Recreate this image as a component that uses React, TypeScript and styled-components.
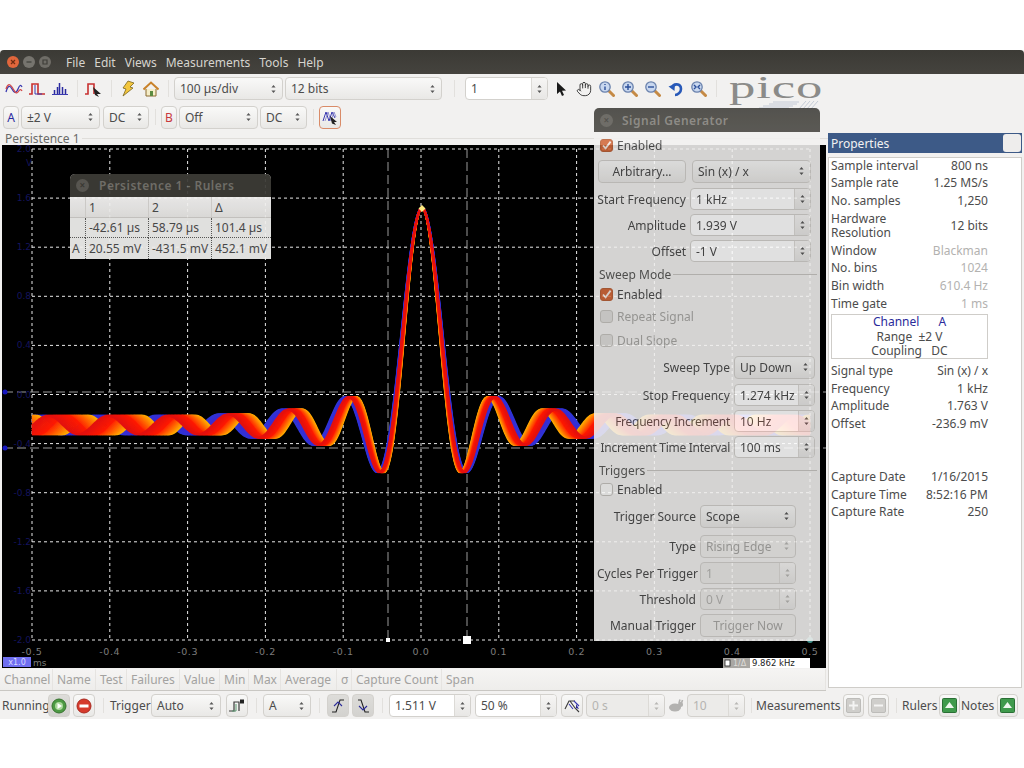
import React from "react";
import styled, { createGlobalStyle, css } from "styled-components";
import { Hand } from "lucide-react";

const Global = createGlobalStyle`
  html, body { margin: 0; padding: 0; background: #fff; }
  body { font-family: "Noto Sans", sans-serif; font-size: 12px; color: #4c4c4c; }
`;

const Page = styled.div`
  position: relative;
  width: 1024px;
  height: 768px;
  padding-top: 50px;
  box-sizing: border-box;
  overflow: hidden;
  background: #fff;
`;

const Win = styled.div`
  width: 1024px;
  height: 669px;
  display: flex;
  flex-direction: column;
  background: #f2f1f0;
`;

const TitleBar = styled.div`
  height: 24px;
  flex: none;
  display: flex;
  align-items: center;
  padding-left: 7px;
  background: linear-gradient(#3b3a35, #45433e);
  border-radius: 4px 4px 0 0;
`;

const Dot = styled.span<{ $c: string; $mr: number }>`
  width: 12px;
  height: 12px;
  border-radius: 50%;
  margin-right: ${(p) => p.$mr}px;
  background: ${(p) => p.$c};
  flex: none;
  display: flex;
  align-items: center;
  justify-content: center;
`;

const MenuItem = styled.span`
  color: #d6d4ce;
  font-size: 12px;
  margin-right: 9px;
`;

const Toolbar = styled.div<{ $h: number; $pl?: number }>`
  height: ${(p) => p.$h}px;
  flex: none;
  display: flex;
  align-items: center;
  padding-left: ${(p) => p.$pl ?? 2}px;
`;

const Slot = styled.span<{ $w?: number }>`
  width: ${(p) => p.$w ?? 23}px;
  height: 20px;
  flex: none;
  display: flex;
  align-items: center;
  justify-content: center;
`;

const Sep = styled.span<{ $w: number; $line?: boolean }>`
  width: ${(p) => p.$w}px;
  flex: none;
  align-self: stretch;
  position: relative;
  ${(p) =>
    p.$line &&
    css`
      &::after {
        content: "";
        position: absolute;
        left: 50%;
        top: 6px;
        bottom: 6px;
        width: 1px;
        background: #e2e0dd;
      }
    `}
`;

const controlBase = css`
  box-sizing: border-box;
  height: 23px;
  flex: none;
  display: flex;
  align-items: center;
  border: 1px solid #d3d1cd;
  border-radius: 4px;
  font-size: 12px;
  color: #4c4c4c;
  white-space: nowrap;
`;

const ComboBox = styled.div<{ $w: number; $off?: boolean }>`
  ${controlBase}
  width: ${(p) => p.$w}px;
  padding: 0 5px;
  justify-content: space-between;
  background: linear-gradient(#f9f9f8, #e9e8e6);
  ${(p) =>
    p.$off &&
    css`
      color: #a9a8a5;
      background: #efeeec;
    `}
`;

const SpinBox = styled.div<{ $w: number; $off?: boolean; $h?: number }>`
  ${controlBase}
  width: ${(p) => p.$w}px;
  height: ${(p) => p.$h ?? 23}px;
  background: ${(p) => (p.$off ? "#ecebe9" : "#fff")};
  color: ${(p) => (p.$off ? "#b5b4b1" : "#4c4c4c")};
  overflow: hidden;
`;

const SpinText = styled.span`
  flex: 1;
  padding-left: 5px;
`;

const SpinArrows = styled.span`
  width: 15px;
  align-self: stretch;
  flex: none;
  display: flex;
  align-items: center;
  justify-content: center;
  border-left: 1px solid #dcdad6;
  background: linear-gradient(#f6f5f4, #e8e7e5);
`;

const IconBtn = styled.div<{ $w?: number; $on?: boolean; $active?: boolean }>`
  ${controlBase}
  width: ${(p) => p.$w ?? 22}px;
  justify-content: center;
  background: ${(p) =>
    p.$on ? "linear-gradient(#dddcd9, #d3d2cf)" : "linear-gradient(#f9f9f8, #e9e8e6)"};
  ${(p) => p.$active && "border: 1px solid #d98b68;"}
`;

const ChanBtn = styled(IconBtn)<{ $c: string }>`
  color: ${(p) => p.$c};
  font-size: 12px;
`;

const ToolLabel = styled.span<{ $w: number }>`
  width: ${(p) => p.$w}px;
  flex: none;
  white-space: nowrap;
  font-size: 12px;
  color: #4c4c4c;
`;

const Logo = styled.div`
  margin-left: 9px;
  width: 91px;
  height: 29px;
  position: relative;
  flex: none;
`;

const LogoText = styled.span`
  position: absolute;
  left: -1px;
  top: -3px;
  font-family: "Liberation Serif", serif;
  font-size: 31px;
  line-height: 34px;
  color: #8b8b89;
  letter-spacing: 0.5px;
  transform: scaleX(1.7);
  transform-origin: left top;
`;

const LogoHatch = styled.svg`
  position: absolute;
  left: 29px;
  top: 27px;
`;

const Main = styled.div`
  flex: 1;
  display: flex;
  min-height: 0;
`;

const LeftCol = styled.div`
  width: 828px;
  flex: none;
  display: flex;
  flex-direction: column;
`;

const ViewLabel = styled.div`
  height: 14px;
  flex: none;
  display: flex;
  align-items: center;
  gap: 2px;
  padding-left: 5px;
  font-size: 12px;
  color: #6a6a68;
  white-space: nowrap;
  &::after {
    content: "";
    flex: 1;
    height: 1px;
    background: #e0dedb;
  }
`;

const Scope = styled.div`
  width: 824px;
  height: 523px;
  margin-left: 2px;
  flex: none;
  background: #000;
  svg {
    display: block;
  }
`;

const MeasureHead = styled.div`
  height: 21px;
  width: 826px;
  margin-top: 1px;
  flex: none;
  display: flex;
  background: linear-gradient(#f5f4f3, #eeedeb);
  border-bottom: 1px solid #c9c7c3;
  box-sizing: content-box;
`;

const HeadCell = styled.div<{ $w?: number }>`
  ${(p) => (p.$w ? `width: ${p.$w}px; flex: none;` : "flex: 1;")}
  box-sizing: border-box;
  padding-left: 4px;
  line-height: 21px;
  color: #a3a2a0;
  font-size: 12px;
  white-space: nowrap;
  border-right: 1px solid #e6e4e1;
`;

const RightCol = styled.div`
  width: 194px;
  padding-top: 2px;
  flex: none;
  display: flex;
  flex-direction: column;
  gap: 4px;
`;

const PropHead = styled.div`
  height: 20px;
  flex: none;
  display: flex;
  align-items: center;
  justify-content: space-between;
  padding: 0 1px 0 3px;
  background: #3d5a87;
  color: #f2f2f2;
  font-size: 12px;
`;

const PropSquare = styled.span`
  width: 18px;
  height: 18px;
  border-radius: 3px;
  background: #eeedec;
`;

const PropBody = styled.div`
  height: 531px;
  box-sizing: border-box;
  border: 1px solid #cfcdc9;
  background: #fff;
  padding-left: 2px;
  width: 194px;
`;

const PropList = styled.div`
  width: 157px;
  margin-top: -1px;
`;

const PropRow = styled.div<{ $tall?: boolean; $off?: boolean }>`
  height: ${(p) => (p.$tall ? 32.2 : 17.6)}px;
  display: flex;
  align-items: center;
  justify-content: space-between;
  font-size: 12px;
  line-height: 14px;
  color: #4c4c4c;
  white-space: nowrap;
  b {
    font-weight: 400;
    color: ${(p) => (p.$off ? "#b3b2b0" : "#4c4c4c")};
  }
`;

const ChannelBox = styled.div`
  margin: 2px 0 3px;
  height: 45px;
  box-sizing: border-box;
  border: 1px solid #cfcdc9;
  display: flex;
  flex-direction: column;
  align-items: center;
  justify-content: center;
  line-height: 14.5px;
  font-size: 12px;
  white-space: pre;
`;

const ChannelHead = styled.div`
  color: #2a2a9a;
  display: flex;
  gap: 19px;
`;

const Spacer = styled.div<{ $h: number }>`
  height: ${(p) => p.$h}px;
`;

/* floating windows */
const Dialog = styled.div`
  position: absolute;
  left: 594px;
  top: 108px;
  width: 226px;
  height: 533px;
  opacity: 0.88;
  background: #f2f1f0;
  border-radius: 5px 5px 0 0;
  display: flex;
  flex-direction: column;
`;

const DialogTitle = styled.div`
  height: 24px;
  flex: none;
  display: flex;
  align-items: center;
  gap: 9px;
  padding-left: 6px;
  background: linear-gradient(#3d3c37, #46443f);
  border-radius: 5px 5px 0 0;
  color: #7f7d77;
  font-size: 12px;
  font-weight: 600;
  letter-spacing: 0.5px;
  margin-bottom: 2px;
`;

const CloseDot = styled.span`
  width: 13px;
  height: 13px;
  flex: none;
  border-radius: 50%;
  background: #5d5b55;
  display: flex;
  align-items: center;
  justify-content: center;
  color: #3d3c37;
  font-size: 10px;
  line-height: 13px;
`;

const Row = styled.div<{ $h: number; $label?: number; $field?: number; $pl?: number }>`
  height: ${(p) => p.$h}px;
  flex: none;
  box-sizing: border-box;
  display: grid;
  align-items: center;
  padding-left: ${(p) => p.$pl ?? 0}px;
  grid-template-columns: ${(p) => (p.$label ? `${p.$label}px ${p.$field}px` : "auto")};
  column-gap: 4px;
`;

const RowLabel = styled.span<{ $tight?: boolean }>`
  text-align: right;
  white-space: nowrap;
  font-size: 12px;
  color: #4c4c4c;
  ${(p) => p.$tight && "letter-spacing: -0.28px;"}
`;

const CheckRow = styled.div<{ $h: number; $off?: boolean; $pl: number }>`
  height: ${(p) => p.$h}px;
  flex: none;
  display: flex;
  align-items: center;
  gap: 4px;
  padding-left: ${(p) => p.$pl}px;
  font-size: 12px;
  color: ${(p) => (p.$off ? "#a9a8a5" : "#4c4c4c")};
`;

const Check = styled.span<{ $on?: boolean; $off?: boolean }>`
  box-sizing: border-box;
  width: 13px;
  height: 13px;
  flex: none;
  border-radius: 3px;
  border: 1px solid ${(p) => (p.$on ? "#b9623b" : "#c6c4c0")};
  background: ${(p) => (p.$on ? "#d2693c" : p.$off ? "#e0dfdc" : "#fafaf9")};
  display: flex;
  align-items: center;
  justify-content: center;
`;

const PushBtn = styled.div<{ $w: number; $off?: boolean }>`
  ${controlBase}
  width: ${(p) => p.$w}px;
  justify-content: center;
  background: ${(p) => (p.$off ? "#efeeec" : "linear-gradient(#f9f9f8, #e9e8e6)")};
  color: ${(p) => (p.$off ? "#a9a8a5" : "#4c4c4c")};
`;

const ArbRow = styled.div`
  height: 30px;
  flex: none;
  display: flex;
  align-items: center;
  gap: 6px;
  padding-left: 4px;
`;

const Group = styled.div`
  margin: 0 3px;
  display: flex;
  flex-direction: column;
  border-radius: 4px;
`;

const GroupTitle = styled.div<{ $h: number }>`
  height: ${(p) => p.$h}px;
  flex: none;
  display: flex;
  align-items: center;
  gap: 2px;
  padding-left: 2px;
  font-size: 12px;
  color: #5a5a58;
  &::after {
    content: "";
    flex: 1;
    height: 1px;
    background: #c9c7c3;
  }
`;

const RulerWin = styled.div`
  position: absolute;
  left: 70px;
  top: 174px;
  width: 201px;
  height: 85px;
  opacity: 0.94;
  background: #efeeec;
  border-radius: 5px 5px 0 0;
`;

const RulerTitle = styled(DialogTitle)`
  height: 23px;
  margin: 0;
  font-size: 12px;
  gap: 10px;
  background: #3d3c37;
  color: #76746e;
`;

const RulerGrid = styled.div`
  display: grid;
  grid-template-columns: 15px 63px 63px 60px;
  grid-template-rows: 21px 20px 21px;
`;

const RulerCell = styled.div<{ $head?: boolean; $last?: boolean }>`
  padding-left: 3px;
  display: flex;
  align-items: center;
  white-space: nowrap;
  font-size: 12px;
  color: #4c4c4c;
  border-left: 1px dotted #5c5c5a;
  ${(p) => !p.$last && "border-bottom: 1px dotted #5c5c5a;"}
  ${(p) => p.$head && "background: linear-gradient(#f6f5f4, #e7e6e4); border-bottom: 1px solid #cfcdc9; border-left: 1px solid #d8d6d3;"}
`;

const RulerSide = styled(RulerCell)`
  border-left: none;
  padding-left: 2px;
`;

const Updown = ({ c = "#585858" }: { c?: string }) => (
  <svg width="7" height="12" viewBox="0 0 7 12">
    <path d="M3.5 2 L5.6 4.6 H1.4 Z M1.4 7.4 H5.6 L3.5 10 Z" fill={c} />
  </svg>
);

const Combo = ({ w, off, children }: { w: number; off?: boolean; children: React.ReactNode }) => (
  <ComboBox $w={w} $off={off}>
    <span>{children}</span>
    <Updown c={off ? "#b8b7b4" : undefined} />
  </ComboBox>
);

const Spin = ({ w, off, h, children }: { w: number; off?: boolean; h?: number; children: React.ReactNode }) => (
  <SpinBox $w={w} $off={off} $h={h}>
    <SpinText>{children}</SpinText>
    <SpinArrows>
      <Updown c={off ? "#b8b7b4" : undefined} />
    </SpinArrows>
  </SpinBox>
);

const Tick = () => (
  <svg width="11" height="11" viewBox="0 0 11 11">
    <path d="M2 5.5 L4.6 8.4 L9.6 1.6" fill="none" stroke="#f4e9e2" strokeWidth="1.8" />
  </svg>
);

const WinMark = ({ d, c }: { d: string; c: string }) => (
  <svg width="8" height="8" viewBox="0 0 8 8">
    <path d={d} fill="none" stroke={c} strokeWidth="1.2" />
  </svg>
);

const WaveIcon = () => (
  <svg width="18" height="14" viewBox="0 0 18 14">
    <path d="M1 10 C3 3 5 3 7 7 S11 12 13 7 S16 3 17 5" fill="none" stroke="#3a3ab0" strokeWidth="1.3" />
    <path d="M1 7 C3 1 5 2 7 5 S11 13 13 10 S16 7 17 9" fill="none" stroke="#d24848" strokeWidth="1.3" />
  </svg>
);

const PulseIcon = () => (
  <svg width="18" height="14" viewBox="0 0 18 14">
    <path d="M1 12 H4 V2 H10 V12 H17" fill="none" stroke="#c83030" strokeWidth="1.6" />
    <path d="M7 3 V12 H14" fill="none" stroke="#3a3ab0" strokeWidth="1" />
  </svg>
);

const BarsIcon = () => (
  <svg width="16" height="14" viewBox="0 0 16 14">
    <path d="M0 12.5 H16" stroke="#3a3ab0" strokeWidth="1" />
    <path d="M2.5 12 V8 M5.5 12 V5 M7.5 12 V1 M10.5 12 V5 M13.5 12 V7" stroke="#2a2aa0" strokeWidth="1.5" />
  </svg>
);

const CursorPulseIcon = () => (
  <svg width="20" height="16" viewBox="0 0 20 16">
    <path d="M1 13 H4 V3 H10 V13" fill="none" stroke="#c83030" strokeWidth="1.6" />
    <path d="M9 6 L17 13 L13 13 L15 16 L11 14 Z" fill="#222" />
  </svg>
);

const BoltIcon = () => (
  <svg width="16" height="17" viewBox="0 0 16 17">
    <path d="M8 1 L14 3 L10 7 L13 8 L3 16 L6 9 L3 8 Z" fill="#f3c63d" stroke="#7a6420" strokeWidth="0.8" />
  </svg>
);

const HomeIcon = () => (
  <svg width="16" height="16" viewBox="0 0 16 16">
    <path d="M3 8 V15 H13 V8" fill="#f5edc8" stroke="#8a6a30" strokeWidth="1" />
    <rect x="7" y="10" width="3" height="5" fill="#5a8a40" />
    <path d="M0.5 8.5 L8 1.5 L15.5 8.5" fill="none" stroke="#c9822a" strokeWidth="2" />
  </svg>
);

const ArrowIcon = () => (
  <svg width="12" height="16" viewBox="0 0 12 16">
    <path d="M2 1 L2 13 L5 10.5 L7 15 L9 14 L7 9.8 L11 9.5 Z" fill="#1a1a1a" />
  </svg>
);

const ZoomIcon = ({ mark }: { mark?: string }) => (
  <svg width="17" height="17" viewBox="0 0 17 17">
    <path d="M10 10 L15.5 15.5" stroke="#c58a45" strokeWidth="3" strokeLinecap="round" />
    <circle cx="7" cy="7" r="5.2" fill="#c8d7ef" stroke="#6a82ad" strokeWidth="1.3" />
    {mark && <path d={mark} stroke="#2b4f9a" strokeWidth="1.4" fill="none" />}
  </svg>
);

const UndoIcon = () => (
  <svg width="16" height="16" viewBox="0 0 16 16">
    <path d="M4 7 C5 2 13 2 13 8 C13 11 10 14 7 14" fill="none" stroke="#2859b8" strokeWidth="2.6" />
    <path d="M0.5 5.5 L7 3 L6.5 10 Z" fill="#2859b8" />
  </svg>
);

const PersistIcon = () => (
  <svg width="17" height="16" viewBox="0 0 17 16">
    <path d="M1 12 L4 3 L7 12 L10 3 L13 9" fill="none" stroke="#3a3ab0" strokeWidth="1" />
    <path d="M3 12 L6 3 L9 12 L12 3 L14 8" fill="none" stroke="#7a7ac8" strokeWidth="0.8" />
    <path d="M8 7 L15 13 L12 13 L14 16 L10 14.5 Z" fill="#222" />
  </svg>
);

const RunIcon = () => (
  <svg width="16" height="16" viewBox="0 0 16 16">
    <circle cx="8" cy="8" r="7" fill="#4d9a44" stroke="#37722f" />
    <circle cx="8" cy="8" r="4" fill="#a9d79a" />
    <path d="M6.5 5 L11 8 L6.5 11 Z" fill="#fff" />
  </svg>
);

const StopIcon = () => (
  <svg width="16" height="16" viewBox="0 0 16 16">
    <circle cx="8" cy="8" r="7" fill="#d63a2c" stroke="#a92a20" />
    <rect x="3.5" y="6.5" width="9" height="3" fill="#fff" />
  </svg>
);

const TrigModeIcon = () => (
  <svg width="16" height="14" viewBox="0 0 16 14">
    <path d="M0 12 H5 V3 H10 V12" fill="none" stroke="#3a3a3a" strokeWidth="1.2" />
    <path d="M3 12 H7 V5" fill="none" stroke="#5a9a70" strokeWidth="1" />
    <rect x="11" y="0.5" width="4" height="4" fill="#222" />
  </svg>
);

const EdgeIcon = ({ down }: { down?: boolean }) => (
  <svg width="14" height="16" viewBox="0 0 14 16">
    <path d={down ? "M2 2 H5 L9 14 H13" : "M1 14 H5 L9 2 H13"} fill="none" stroke="#222" strokeWidth="1.1" />
    <path d={down ? "M3 8 L7 12 L11 8" : "M3 8 L7 4 L11 8"} fill="none" stroke="#2a2a9a" strokeWidth="1.1" />
  </svg>
);

const RampIcon = () => (
  <svg width="17" height="16" viewBox="0 0 17 16">
    <path d="M1 11 L5 3 L11 3 M6 3 L11 10 L15 14" fill="none" stroke="#3a3a3a" strokeWidth="1.1" />
    <path d="M5 6 L9 11 M10 3 L15 8" fill="none" stroke="#3a3ab0" strokeWidth="1.1" />
    <path d="M12 6 L15 11 L12 10" fill="#2a2a9a" />
  </svg>
);

const RabbitIcon = () => (
  <svg width="16" height="13" viewBox="0 0 16 13">
    <ellipse cx="7" cy="8.5" rx="6" ry="4" fill="#b3b2b0" />
    <circle cx="12.5" cy="5.5" r="2.5" fill="#b3b2b0" />
    <path d="M11 4 L12 0.5 M13.5 4 L14.5 1" stroke="#b3b2b0" strokeWidth="1.6" />
  </svg>
);

const PlusIcon = ({ minus }: { minus?: boolean }) => (
  <svg width="15" height="15" viewBox="0 0 15 15">
    <rect x="0.5" y="0.5" width="14" height="14" rx="1.5" fill="#cfcecb" stroke="#bdbcb9" />
    <path d={minus ? "M3 7.5 H12" : "M3 7.5 H12 M7.5 3 V12"} stroke="#f4f4f3" strokeWidth="2" />
  </svg>
);

const GreenUp = () => (
  <svg width="15" height="15" viewBox="0 0 15 15">
    <rect x="0.5" y="0.5" width="14" height="14" rx="1" fill="#3f9a4c" stroke="#2a6f35" />
    <path d="M3 10 L7.5 4 L12 10 Z" fill="#eef7ee" />
  </svg>
);

/* scope geometry in page coordinates */
const X0 = 32;
const X1 = 810;
const Y0 = 149;
const Y1 = 640;
const CX = 422;
const gridX = Array.from({ length: 11 }, (_, i) => X0 + ((X1 - X0) * i) / 10);
const gridY = Array.from({ length: 11 }, (_, i) => Y0 + ((Y1 - Y0) * i) / 10);
const xLabels = ["-0.5", "-0.4", "-0.3", "-0.2", "-0.1", "0.0", "0.1", "0.2", "0.3", "0.4", "0.5"];
const yLabels = ["2.0", "1.6", "1.2", "0.8", "0.4", "0.0", "-0.4", "-0.8", "-1.2", "-1.6", "-2.0"];

function lerp(a: number[], b: number[], t: number) {
  return `rgb(${a.map((v, i) => Math.round(v + (b[i] - v) * t)).join(",")})`;
}

function traceColor(t: number) {
  if (t < 0.25) return lerp([45, 55, 215], [60, 40, 210], t / 0.25);
  if (t < 0.6) return lerp([225, 15, 15], [255, 25, 0], (t - 0.25) / 0.35);
  return lerp([255, 40, 0], [255, 175, 0], (t - 0.6) / 0.4);
}

const TRACES = 30;
const KMIN = 0.1;
const KMAX = 0.118;

function tracePath(k: number) {
  let d = "";
  for (let x = X0; x <= X1; x += 1) {
    const u = (x - CX) * k;
    const au = Math.abs(u);
    const v = au < 0.01 ? 1 : Math.sin(u) * Math.max(1 / au, 0.043) * Math.sign(u);
    d += `${x === X0 ? "M" : "L"}${x} ${(425 - 217 * v).toFixed(1)}`;
  }
  return d;
}

// blue at the back, then orange down to red so the red runs on top
const traceOrder = Array.from({ length: TRACES }, (_, i) => i / (TRACES - 1)).sort((a, b) => {
  const rank = (t: number) => (t < 0.25 ? t - 1 : 1 - t);
  return rank(a) - rank(b);
});
const traces = traceOrder.map((t) => ({
  d: tracePath(KMIN + (KMAX - KMIN) * t),
  c: traceColor(t),
}));

function ScopePlot() {
  return (
    <svg width="824" height="523" viewBox="2 145 824 523">
      {gridY.map((y) => (
        <line key={y} x1={X0} x2={X1} y1={y} y2={y} stroke="#e8e8e8" strokeDasharray="3 3" />
      ))}
      {gridX.map((x) => (
        <line key={x} x1={x} x2={x} y1={Y0} y2={Y1} stroke="#e8e8e8" strokeDasharray="3 3" />
      ))}
      {[392, 448].map((y) => (
        <g key={y}>
          <line x1={4} x2={826} y1={y} y2={y} stroke="#9a9a9a" strokeDasharray="9 4" />
          <circle cx={5} cy={y} r={2.5} fill="#1515c0" />
        </g>
      ))}
      {[388, 467].map((x) => (
        <line key={x} x1={x} x2={x} y1={149} y2={640} stroke="#9a9a9a" strokeDasharray="9 4" />
      ))}
      {traces.map((tr, i) => (
        <path key={i} d={tr.d} fill="none" stroke={tr.c} strokeWidth="2" />
      ))}
      <path d="M422 205 L425.5 208.5 L422 212 L418.5 208.5 Z" fill="#ffe980" />
      <rect x={386} y={638} width={4} height={4} fill="#fff" />
      <rect x={463} y={636} width={8} height={8} fill="#fff" />
      <circle cx={810} cy={640} r={3} fill="#3f8f8a" />
      {yLabels.map((l, i) => (
        <text key={l} x={31} y={gridY[i] + 3} textAnchor="end" fontSize="9" fill="#14145e" fontFamily="'DejaVu Sans', sans-serif">
          {l}
        </text>
      ))}
      <text x={26} y={166} fontSize="9" fill="#14145e" fontFamily="'DejaVu Sans', sans-serif">V</text>
      {xLabels.map((l, i) => (
        <text key={l} x={gridX[i]} y={655} textAnchor="middle" fontSize="9.5" letterSpacing="0.6" fill="#7c7c7c" fontFamily="'DejaVu Sans', sans-serif">
          {l}
        </text>
      ))}
      <rect x={3} y={657} width={28} height={10} fill="#6f6ff0" />
      <text x={17} y={665} textAnchor="middle" fontSize="8" fill="#d8d8ff" fontFamily="'DejaVu Sans', sans-serif">x1.0</text>
      <text x={33} y={666} fontSize="9" fill="#7c7c7c" fontFamily="'DejaVu Sans', sans-serif">ms</text>
      <rect x={723} y={658} width={87} height={10} fill="#fff" />
      <rect x={723} y={658} width={27} height={10} fill="#a9a7a3" />
      <rect x={725} y={660} width={5} height={6} fill="#fff" stroke="#222" strokeWidth="0.8" />
      <text x={733} y={666} fontSize="8" fill="#dedcd8" fontFamily="'DejaVu Sans', sans-serif">1/Δ</text>
      <text x={752} y={666} fontSize="8.5" fill="#222" fontFamily="'DejaVu Sans', sans-serif">9.862 kHz</text>
    </svg>
  );
}

const measureCols = [
  ["Channel", 53],
  ["Name", 43],
  ["Test", 31],
  ["Failures", 53],
  ["Value", 40],
  ["Min", 29],
  ["Max", 32],
  ["Average", 56],
  ["σ", 15],
  ["Capture Count", 90],
] as const;

function App() {
  return (
    <Page>
      <Global />
      <Win>
        <TitleBar>
          <Dot $c="#e0663c" $mr={4}><WinMark d="M2 2 L6 6 M6 2 L2 6" c="#6e2c12" /></Dot>
          <Dot $c="#76746e" $mr={4}><WinMark d="M1.5 4 H6.5" c="#3f3e39" /></Dot>
          <Dot $c="#6f6d67" $mr={15}><WinMark d="M2 2 H6 V6 H2 Z" c="#3f3e39" /></Dot>
          <MenuItem>File</MenuItem>
          <MenuItem>Edit</MenuItem>
          <MenuItem>Views</MenuItem>
          <MenuItem>Measurements</MenuItem>
          <MenuItem>Tools</MenuItem>
          <MenuItem>Help</MenuItem>
        </TitleBar>

        <Toolbar $h={29}>
          <Slot><WaveIcon /></Slot>
          <Slot><PulseIcon /></Slot>
          <Slot><BarsIcon /></Slot>
          <Sep $w={11} $line />
          <Slot><CursorPulseIcon /></Slot>
          <Sep $w={11} $line />
          <Slot><BoltIcon /></Slot>
          <Slot><HomeIcon /></Slot>
          <Sep $w={12} $line />
          <Combo w={109}>100 µs/div</Combo>
          <Sep $w={2} />
          <Combo w={157}>12 bits</Combo>
          <Sep $w={23} $line />
          <Spin w={83}>1</Spin>
          <Sep $w={1} />
          <Slot><ArrowIcon /></Slot>
          <Slot><Hand size={16} color="#333" strokeWidth={1.4} /></Slot>
          <Slot><ZoomIcon mark="M7 4 V5 M7 6.5 V10" /></Slot>
          <Slot><ZoomIcon mark="M4 7 H10 M7 4 V10" /></Slot>
          <Slot><ZoomIcon mark="M4 7 H10" /></Slot>
          <Slot><UndoIcon /></Slot>
          <Slot><ZoomIcon mark="M4 5 L6 7 L4 9 M10 5 L8 7 L10 9" /></Slot>
          <Sep $w={11} $line />
          <Logo>
            <LogoText>pico</LogoText>
            <LogoHatch width="60" height="8" viewBox="0 0 60 8">
              <path
                d="M0 7 H30 M4 5 H34 M10 3 H38 M14 1 H40 M40 8 L47 0 M44 8 L51 0 M48 8 L55 0 M52 8 L59 0"
                stroke="#b9c2cf"
                strokeWidth="0.8"
                fill="none"
              />
            </LogoHatch>
          </Logo>
        </Toolbar>

        <Toolbar $h={28} $pl={3}>
          <ChanBtn $w={16} $c="#2a2aa0">A</ChanBtn>
          <Sep $w={2} />
          <Combo w={79}>±2 V</Combo>
          <Sep $w={3} />
          <Combo w={46}>DC</Combo>
          <Sep $w={12} $line />
          <ChanBtn $w={16} $c="#c8383c">B</ChanBtn>
          <Sep $w={2} />
          <Combo w={79}>Off</Combo>
          <Sep $w={2} />
          <Combo w={47}>DC</Combo>
          <Sep $w={12} $line />
          <IconBtn $active><PersistIcon /></IconBtn>
        </Toolbar>

        <Main>
          <LeftCol>
            <ViewLabel>Persistence 1</ViewLabel>
            <Scope>
              <ScopePlot />
            </Scope>
            <MeasureHead>
              {measureCols.map(([name, w]) => (
                <HeadCell key={name} $w={w}>{name}</HeadCell>
              ))}
              <HeadCell>Span</HeadCell>
            </MeasureHead>
          </LeftCol>

          <RightCol>
            <PropHead>
              Properties
              <PropSquare />
            </PropHead>
            <PropBody>
              <PropList>
                <PropRow><span>Sample interval</span><b>800 ns</b></PropRow>
                <PropRow><span>Sample rate</span><b>1.25 MS/s</b></PropRow>
                <PropRow><span>No. samples</span><b>1,250</b></PropRow>
                <PropRow $tall><span>Hardware<br />Resolution</span><b>12 bits</b></PropRow>
                <PropRow $off><span>Window</span><b>Blackman</b></PropRow>
                <PropRow $off><span>No. bins</span><b>1024</b></PropRow>
                <PropRow $off><span>Bin width</span><b>610.4 Hz</b></PropRow>
                <PropRow $off><span>Time gate</span><b>1 ms</b></PropRow>
                <ChannelBox>
                  <ChannelHead><span>Channel</span><span>A</span></ChannelHead>
                  <span>Range  ±2 V</span>
                  <span>Coupling   DC</span>
                </ChannelBox>
                <PropRow><span>Signal type</span><b>Sin (x) / x</b></PropRow>
                <PropRow><span>Frequency</span><b>1 kHz</b></PropRow>
                <PropRow><span>Amplitude</span><b>1.763 V</b></PropRow>
                <PropRow><span>Offset</span><b>-236.9 mV</b></PropRow>
                <Spacer $h={35.4} />
                <PropRow><span>Capture Date</span><b>1/16/2015</b></PropRow>
                <PropRow><span>Capture Time</span><b>8:52:16 PM</b></PropRow>
                <PropRow><span>Capture Rate</span><b>250</b></PropRow>
              </PropList>
            </PropBody>
          </RightCol>
        </Main>

        <Toolbar $h={27}>
          <ToolLabel $w={46}>Running</ToolLabel>
          <IconBtn $on><RunIcon /></IconBtn>
          <Sep $w={3} />
          <IconBtn><StopIcon /></IconBtn>
          <Sep $w={15} $line />
          <ToolLabel $w={41}>Trigger</ToolLabel>
          <Combo w={70}>Auto</Combo>
          <Sep $w={5} />
          <IconBtn><TrigModeIcon /></IconBtn>
          <Sep $w={15} $line />
          <Combo w={48}>A</Combo>
          <Sep $w={16} $line />
          <IconBtn $on><EdgeIcon /></IconBtn>
          <Sep $w={3} />
          <IconBtn $on><EdgeIcon down /></IconBtn>
          <Sep $w={15} $line />
          <Spin w={82}>1.511 V</Spin>
          <Sep $w={4} />
          <Spin w={82}>50 %</Spin>
          <Sep $w={4} />
          <IconBtn><RampIcon /></IconBtn>
          <Sep $w={3} />
          <Spin w={79} off>0 s</Spin>
          <Slot $w={22}><RabbitIcon /></Slot>
          <Spin w={58} off>10</Spin>
          <Sep $w={11} $line />
          <ToolLabel $w={87}>Measurements</ToolLabel>
          <IconBtn $w={21}><PlusIcon /></IconBtn>
          <Sep $w={4} />
          <IconBtn $w={21}><PlusIcon minus /></IconBtn>
          <Sep $w={13} $line />
          <ToolLabel $w={37}>Rulers</ToolLabel>
          <IconBtn $w={21}><GreenUp /></IconBtn>
          <Sep $w={1} />
          <ToolLabel $w={36}>Notes</ToolLabel>
          <IconBtn $w={21}><GreenUp /></IconBtn>
        </Toolbar>
      </Win>

      <RulerWin>
        <RulerTitle>
          <CloseDot>×</CloseDot>
          Persistence 1 - Rulers
        </RulerTitle>
        <RulerGrid>
          <RulerSide $head />
          <RulerCell $head>1</RulerCell>
          <RulerCell $head>2</RulerCell>
          <RulerCell $head>Δ</RulerCell>
          <RulerSide />
          <RulerCell>-42.61 µs</RulerCell>
          <RulerCell>58.79 µs</RulerCell>
          <RulerCell>101.4 µs</RulerCell>
          <RulerSide $last>A</RulerSide>
          <RulerCell $last>20.55 mV</RulerCell>
          <RulerCell $last>-431.5 mV</RulerCell>
          <RulerCell $last>452.1 mV</RulerCell>
        </RulerGrid>
      </RulerWin>

      <Dialog>
        <DialogTitle>
          <CloseDot>×</CloseDot>
          Signal Generator
        </DialogTitle>
        <CheckRow $h={22} $pl={6}><Check $on><Tick /></Check>Enabled</CheckRow>
        <ArbRow>
          <PushBtn $w={88}>Arbitrary...</PushBtn>
          <Combo w={119}>Sin (x) / x</Combo>
        </ArbRow>
        <Row $h={26} $label={90} $field={121} $pl={2}><RowLabel>Start Frequency</RowLabel><Spin w={121} h={22}>1 kHz</Spin></Row>
        <Row $h={26} $label={90} $field={121} $pl={2}><RowLabel>Amplitude</RowLabel><Spin w={121} h={22}>1.939 V</Spin></Row>
        <Row $h={26} $label={90} $field={121} $pl={2}><RowLabel>Offset</RowLabel><Spin w={121} h={22}>-1 V</Spin></Row>

        <Group>
          <GroupTitle $h={20}>Sweep Mode</GroupTitle>
          <CheckRow $h={20} $pl={3}><Check $on><Tick /></Check>Enabled</CheckRow>
          <CheckRow $h={25} $pl={3} $off><Check $off />Repeat Signal</CheckRow>
          <CheckRow $h={23} $pl={3} $off><Check $off />Dual Slope</CheckRow>
          <Row $h={30} $label={133} $field={81}><RowLabel>Sweep Type</RowLabel><Combo w={81}>Up Down</Combo></Row>
          <Row $h={26} $label={133} $field={81}><RowLabel>Stop Frequency</RowLabel><Spin w={81} h={22}>1.274 kHz</Spin></Row>
          <Row $h={26} $label={133} $field={81}><RowLabel $tight>Frequency Increment</RowLabel><Spin w={81} h={22}>10 Hz</Spin></Row>
          <Row $h={26} $label={133} $field={81}><RowLabel $tight>Increment Time Interval</RowLabel><Spin w={81} h={22}>100 ms</Spin></Row>
        </Group>

        <Group>
          <GroupTitle $h={21}>Triggers</GroupTitle>
          <CheckRow $h={17} $pl={3}><Check />Enabled</CheckRow>
          <Row $h={36} $label={99} $field={96}><RowLabel>Trigger Source</RowLabel><Combo w={96}>Scope</Combo></Row>
          <Row $h={24} $label={99} $field={96}><RowLabel>Type</RowLabel><Combo w={96} off>Rising Edge</Combo></Row>
          <Row $h={30} $label={99} $field={96}><RowLabel>Cycles Per Trigger</RowLabel><Spin w={96} h={22} off>1</Spin></Row>
          <Row $h={22} $label={99} $field={96}><RowLabel>Threshold</RowLabel><Spin w={96} h={22} off>0 V</Spin></Row>
          <Row $h={31} $label={99} $field={96}><RowLabel>Manual Trigger</RowLabel><PushBtn $w={96} $off>Trigger Now</PushBtn></Row>
        </Group>
      </Dialog>
    </Page>
  );
}

export default App;
